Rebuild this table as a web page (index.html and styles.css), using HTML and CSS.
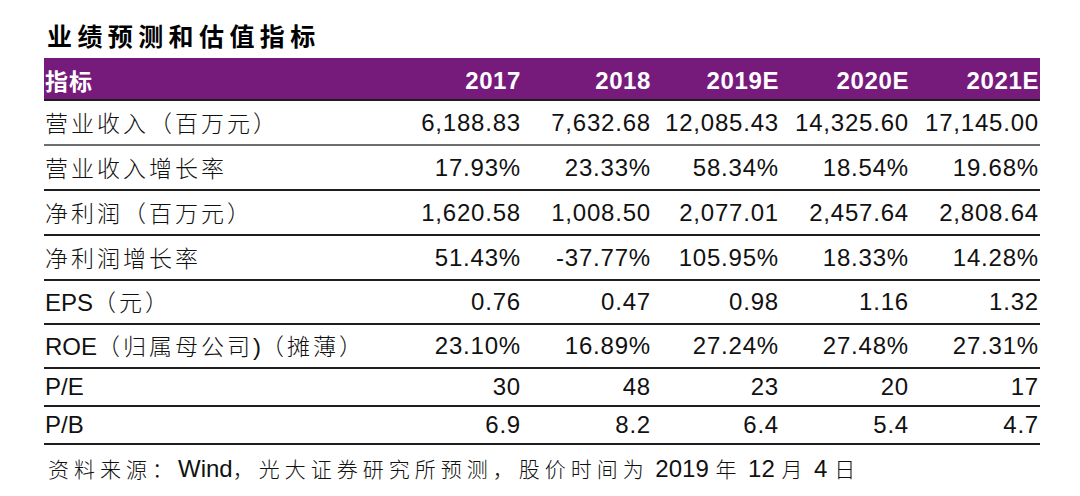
FILE: index.html
```html
<!DOCTYPE html>
<html lang="zh-CN">
<head>
<meta charset="utf-8">
<title>业绩预测和估值指标</title>
<link rel="stylesheet" href="styles.css">
</head>
<body>
<div class="page">
  <div class="title">业绩预测和估值指标</div>
  <div class="table">
    <div class="row head">
      <div class="cell label"><span class="cn">指标</span></div>
      <div class="cell num w130">2017</div>
      <div class="cell num w130">2018</div>
      <div class="cell num w128">2019E</div>
      <div class="cell num w130">2020E</div>
      <div class="cell num w130">2021E</div>
    </div>
    <div class="row r45 light">
      <div class="cell label"><span class="cn">营业收入（百万元）</span></div>
      <div class="cell num w130">6,188.83</div>
      <div class="cell num w130">7,632.68</div>
      <div class="cell num w128">12,085.43</div>
      <div class="cell num w130">14,325.60</div>
      <div class="cell num w130">17,145.00</div>
    </div>
    <div class="row r45">
      <div class="cell label"><span class="cn">营业收入增长率</span></div>
      <div class="cell num w130">17.93%</div>
      <div class="cell num w130">23.33%</div>
      <div class="cell num w128">58.34%</div>
      <div class="cell num w130">18.54%</div>
      <div class="cell num w130">19.68%</div>
    </div>
    <div class="row r45">
      <div class="cell label"><span class="cn">净利润（百万元）</span></div>
      <div class="cell num w130">1,620.58</div>
      <div class="cell num w130">1,008.50</div>
      <div class="cell num w128">2,077.01</div>
      <div class="cell num w130">2,457.64</div>
      <div class="cell num w130">2,808.64</div>
    </div>
    <div class="row r45">
      <div class="cell label"><span class="cn">净利润增长率</span></div>
      <div class="cell num w130">51.43%</div>
      <div class="cell num w130">-37.77%</div>
      <div class="cell num w128">105.95%</div>
      <div class="cell num w130">18.33%</div>
      <div class="cell num w130">14.28%</div>
    </div>
    <div class="row r44">
      <div class="cell label">EPS<span class="cn">（元）</span></div>
      <div class="cell num w130">0.76</div>
      <div class="cell num w130">0.47</div>
      <div class="cell num w128">0.98</div>
      <div class="cell num w130">1.16</div>
      <div class="cell num w130">1.32</div>
    </div>
    <div class="row r44">
      <div class="cell label">ROE<span class="cn">（归属母公司</span>)<span class="cn">（摊薄）</span></div>
      <div class="cell num w130">23.10%</div>
      <div class="cell num w130">16.89%</div>
      <div class="cell num w128">27.24%</div>
      <div class="cell num w130">27.48%</div>
      <div class="cell num w130">27.31%</div>
    </div>
    <div class="row r38">
      <div class="cell label">P/E</div>
      <div class="cell num w130">30</div>
      <div class="cell num w130">48</div>
      <div class="cell num w128">23</div>
      <div class="cell num w130">20</div>
      <div class="cell num w130">17</div>
    </div>
    <div class="row r38">
      <div class="cell label">P/B</div>
      <div class="cell num w130">6.9</div>
      <div class="cell num w130">8.2</div>
      <div class="cell num w128">6.4</div>
      <div class="cell num w130">5.4</div>
      <div class="cell num w130">4.7</div>
    </div>
  </div>
  <div class="source"><span class="cn">资料来源：</span>Wind<span class="cn">，光大证券研究所预测，股价时间为</span> 2019 <span class="cn">年</span> 12 <span class="cn">月</span> 4 <span class="cn">日</span></div>
</div>
</body>
</html>
```

FILE: styles.css
```css
html, body {
  margin: 0;
  padding: 0;
  background: #ffffff;
}

.page {
  padding: 20px 0 0 44px;
  font-family: "Liberation Sans", "Noto Sans CJK SC", sans-serif;
  color: #111111;
}

.title {
  font-family: "Noto Sans CJK SC", sans-serif;
  font-weight: 700;
  font-size: 25px;
  line-height: 30px;
  height: 30px;
  letter-spacing: 5.4px;
  padding-left: 3px;
  margin-bottom: 8px;
  color: #000000;
}

.table {
  width: 996px;
  display: flex;
  flex-direction: column;
}

.row {
  display: flex;
  align-items: center;
  box-sizing: border-box;
  border-bottom: 2px solid #1e1e1e;
}

.row.head {
  height: 43px;
  background: #761b7b;
  color: #ffffff;
  font-weight: 700;
  padding-top: 5px;
}

.row.light {
  border-bottom-color: #6e6e6e;
}

.r45 { height: 45px; }
.r44 { height: 44px; }
.r38 { height: 38px; }

.cell {
  font-size: 24px;
  line-height: 28px;
  white-space: nowrap;
}

.label {
  width: 348px;
  padding-left: 1px;
  box-sizing: border-box;
}

.num {
  text-align: right;
  letter-spacing: 0.8px;
  padding-right: 1px;
  box-sizing: border-box;
}

.head .num {
  letter-spacing: 0.6px;
}

.w130 { width: 130px; }
.w128 { width: 128px; }

.cn {
  font-family: "Noto Sans CJK SC", sans-serif;
  font-weight: 300;
  font-size: 23px;
  letter-spacing: 3px;
}

.head .cn {
  font-weight: 700;
  font-size: 23px;
  letter-spacing: 1px;
}

.source {
  padding-top: 8px;
  padding-left: 4px;
  font-size: 24px;
  line-height: 30px;
  color: #111111;
}

.source .cn {
  font-size: 21px;
  letter-spacing: 5px;
}
```
